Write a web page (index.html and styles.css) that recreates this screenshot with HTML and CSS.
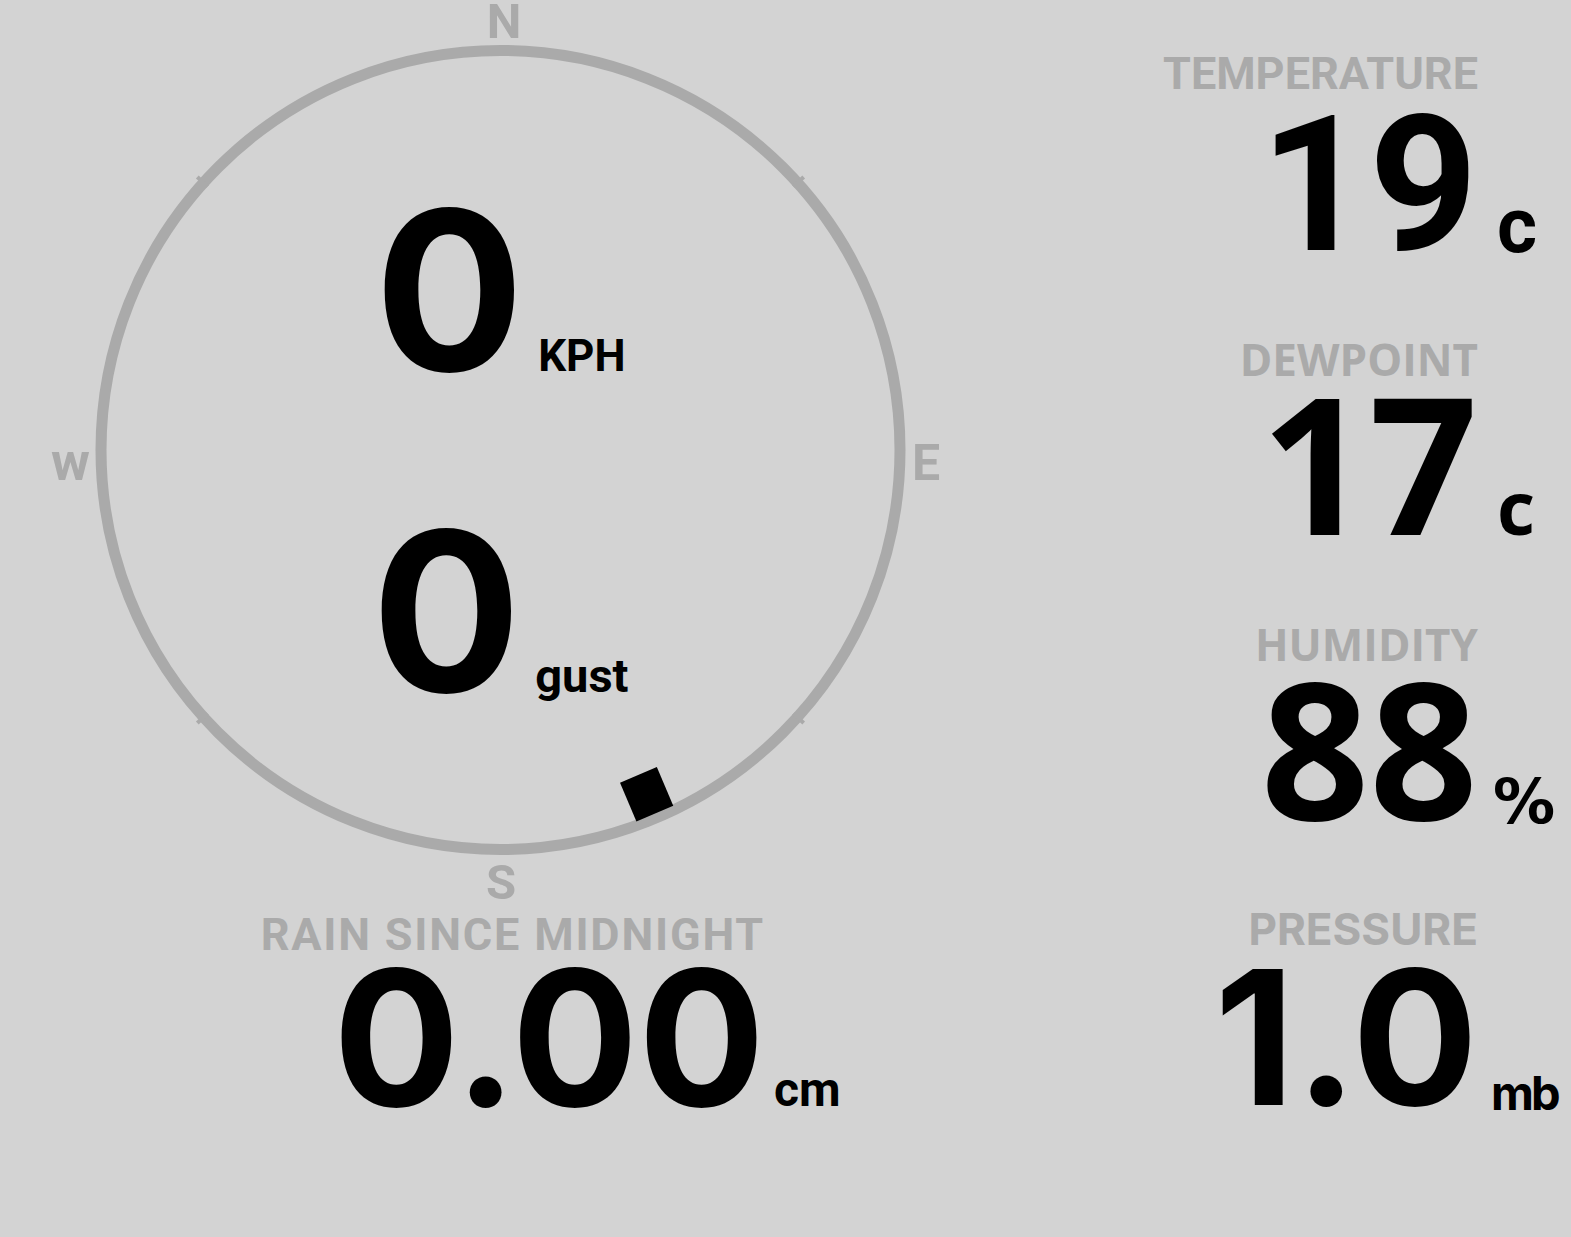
FILE: index.html
```html
<!DOCTYPE html>
<html lang="en">
<head>
  <meta charset="UTF-8">
  <title>Weather Station</title>
  <link rel="stylesheet" href="styles.css">
</head>
<body>
  <div class="station">
    <div class="wind">
      <div class="compass">
        <svg class="dial" width="1000" height="915" viewBox="0 0 1000 915">
          <circle cx="500.5" cy="450" r="399.5" fill="none" stroke="#aaa" stroke-width="11"/>
          <g stroke="#aaa" stroke-width="4">
            <line x1="500.5" y1="42" x2="500.5" y2="56" transform="rotate(48 500.5 450)"/>
            <line x1="500.5" y1="42" x2="500.5" y2="56" transform="rotate(132 500.5 450)"/>
            <line x1="500.5" y1="42" x2="500.5" y2="56" transform="rotate(228 500.5 450)"/>
            <line x1="500.5" y1="42" x2="500.5" y2="56" transform="rotate(312 500.5 450)"/>
          </g>
          <!-- wind direction marker, bearing in degrees -->
          <g transform="translate(500.5 450) rotate(157)">
            <rect x="-20" y="-395" width="40" height="42" fill="#000"/>
          </g>
        </svg>
        <span class="point point-n">N</span>
        <span class="point point-e">E</span>
        <span class="point point-s">S</span>
        <span class="point point-w">w</span>

        <div class="speeds">
          <div class="speed">
            <span class="speed-value">0</span>
            <span class="speed-unit">KPH</span>
          </div>
          <div class="speed">
            <span class="speed-value">0</span>
            <span class="speed-unit gust">gust</span>
          </div>
        </div>
      </div>

      <div class="rain">
        <div class="rain-label">RAIN SINCE MIDNIGHT</div>
        <div class="rain-value">0.00<span class="unit">cm</span></div>
      </div>
    </div>

    <div class="readings">
      <div class="reading din">
        <div class="reading-label">TEMPERATURE</div>
        <div class="reading-value">19<span class="unit unit-c">c</span></div>
      </div>
      <div class="reading humanist">
        <div class="reading-label">DEWPOINT</div>
        <div class="reading-value">17<span class="unit unit-c">c</span></div>
      </div>
      <div class="reading humanist">
        <div class="reading-label">HUMIDITY</div>
        <div class="reading-value">88<span class="unit unit-pct">%</span></div>
      </div>
      <div class="reading grotesk">
        <div class="reading-label">PRESSURE</div>
        <div class="reading-value">1.0<span class="unit unit-mb">mb</span></div>
      </div>
    </div>
  </div>
</body>
</html>
```

FILE: styles.css
```css
body {
  margin: 0;
  background: #d3d3d3;
  color: #000;
  font-family: "Roboto", "Liberation Sans", sans-serif;
  font-weight: 700;
  overflow: hidden;
}

.station {
  display: flex;
  width: 1571px;
  height: 1237px;
}

/* left side: compass + rain */
.wind {
  width: 1000px;
  display: flex;
  flex-direction: column;
}

.compass {
  position: relative;
  height: 915px;
}

.dial {
  position: absolute;
  left: 0;
  top: 0;
}

.point {
  position: absolute;
  color: #aaa;
  line-height: 40px;
}

.point-n { left: 504px; top: 2px; font-size: 49px; transform: translateX(-50%); }
.point-s { left: 501px; top: 863px; font-size: 49px; transform: translateX(-50%); }
.point-e { left: 912px; top: 443px; font-size: 50px; }
.point-w { left: 51px; top: 442px; font-size: 53px; }

.speeds {
  position: relative;
  display: flex;
  flex-direction: column;
  align-items: center;
  gap: 121px;
  padding-top: 191px;
}

.speed {
  display: flex;
  align-items: baseline;
  gap: 14px;
}

.speed-value {
  font-family: "Inter", sans-serif;
  font-size: 222px;
  line-height: 200px;
}

.speed-unit {
  font-size: 44px;
  line-height: 1;
}

.speed-unit.gust {
  font-size: 47px;
}

.rain {
  width: 770px;
  text-align: right;
}

.rain-label {
  font-size: 45px;
  line-height: 40px;
  letter-spacing: 1.8px;
  padding-right: 5px;
  color: #aaa;
}

.rain-value {
  font-family: "Inter", sans-serif;
  font-size: 188px;
  line-height: 160px;
  margin-top: 3px;
  padding-right: 5px;
}

.rain-value .unit {
  font-family: "Roboto", sans-serif;
  font-size: 48px;
  text-indent: 9px;
}

/* zero-width so the unit hangs past the right edge */
.unit {
  display: inline-block;
  width: 0;
  white-space: nowrap;
  line-height: 1;
  letter-spacing: 0;
  text-align: left;
  text-indent: 15px;
}

/* right column */
.readings {
  margin-left: auto;
  margin-right: 93px;
  display: grid;
  grid-auto-rows: 285px;
  padding-top: 54px;
  text-align: right;
}

.reading-label {
  font-size: 45px;
  line-height: 40px;
  color: #aaa;
}

.reading-value {
  font-size: 190px;
  line-height: 160px;
}

.din { font-family: "Roboto", sans-serif; }
.din .reading-value { margin-top: 11px; }

.humanist { font-family: "Open Sans", sans-serif; }
.humanist .reading-label { font-size: 44px; }
.humanist .reading-value { margin-top: 3px; }

.grotesk { font-family: "Inter", sans-serif; }
.grotesk .reading-label { font-size: 44px; }
.grotesk .reading-value { font-size: 187px; margin-top: 8px; }

.unit-c { text-indent: 19px; }
.din .unit-c { font-size: 77px; vertical-align: -2px; }
.humanist .unit-c { font-size: 74px; }

.unit-pct {
  font-family: "DejaVu Sans", sans-serif;
  font-size: 62px;
  vertical-align: -3px;
}

.unit-mb {
  font-size: 47px;
  letter-spacing: -3px;
  text-indent: 13px;
  vertical-align: -5px;
}
```
